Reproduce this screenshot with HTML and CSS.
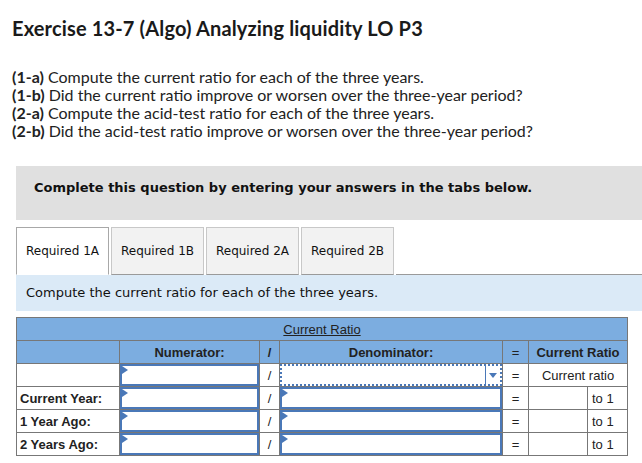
FILE: index.html
```
<!DOCTYPE html>
<html>
<head>
<meta charset="utf-8">
<link rel="stylesheet" href="styles.css">
</head>
<body>
<h1 class="title">Exercise 13-7 (Algo) Analyzing liquidity LO P3</h1>
<div class="questions">
  <p><b>(1-a)</b> Compute the current ratio for each of the three years.</p>
  <p><b>(1-b)</b> Did the current ratio improve or worsen over the three-year period?</p>
  <p><b>(2-a)</b> Compute the acid-test ratio for each of the three years.</p>
  <p><b>(2-b)</b> Did the acid-test ratio improve or worsen over the three-year period?</p>
</div>
<div class="wrap">
  <div class="notice">Complete this question by entering your answers in the tabs below.</div>
  <div class="tabs">
    <div class="tab active">Required 1A</div>
    <div class="tab">Required 1B</div>
    <div class="tab">Required 2A</div>
    <div class="tab">Required 2B</div>
    <div class="tabfill"></div>
  </div>
  <div class="instr">Compute the current ratio for each of the three years.</div>
  <table class="grid">
    <colgroup>
      <col class="c-label"><col class="c-num"><col class="c-slash"><col class="c-den"><col class="c-eq"><col class="c-r1"><col class="c-r2">
    </colgroup>
    <tr class="h1"><th colspan="7"><span class="u">Current Ratio</span></th></tr>
    <tr class="h2">
      <th></th><th class="b">Numerator:</th><th class="b">/</th><th class="b">Denominator:</th><th>=</th><th colspan="2" class="b">Current Ratio</th>
    </tr>
    <tr>
      <td></td>
      <td class="in"><div class="box"></div></td>
      <td class="sl">/</td>
      <td class="in"><div class="sel"><span class="arrow"></span></div></td>
      <td class="eq">=</td>
      <td colspan="2" class="ctr">Current ratio</td>
    </tr>
    <tr>
      <td class="lbl">Current Year:</td>
      <td class="in"><div class="box"></div></td>
      <td class="sl">/</td>
      <td class="in"><div class="box"></div></td>
      <td class="eq">=</td>
      <td></td><td class="to">to 1</td>
    </tr>
    <tr>
      <td class="lbl">1 Year Ago:</td>
      <td class="in"><div class="box"></div></td>
      <td class="sl">/</td>
      <td class="in"><div class="box"></div></td>
      <td class="eq">=</td>
      <td></td><td class="to">to 1</td>
    </tr>
    <tr>
      <td class="lbl">2 Years Ago:</td>
      <td class="in"><div class="box"></div></td>
      <td class="sl">/</td>
      <td class="in"><div class="box"></div></td>
      <td class="eq">=</td>
      <td></td><td class="to">to 1</td>
    </tr>
  </table>
</div>
</body>
</html>
```
FILE: styles.css
```
html, body { margin: 0; padding: 0; background: #fff; }
body { width: 642px; overflow: hidden; color: #222; }
.title {
  font-family: Lato, "Open Sans", sans-serif;
  font-weight: 700;
  font-size: 20px;
  line-height: 22px;
  margin: 0;
  padding: 17px 0 0 12px;
  color: #1a1a1a;
  letter-spacing: 0.15px;
}
.questions {
  font-family: Lato, "Open Sans", sans-serif;
  font-size: 16px;
  line-height: 18px;
  padding: 29px 0 0 12px;
  color: #222;
}
.questions p { margin: 0; }
.questions b { font-weight: 700; }
.wrap { padding: 26px 0 0 16px; }
.notice {
  background: #e0e0e0;
  height: 54px;
  box-sizing: border-box;
  padding: 14px 0 0 18px;
  font-family: "DejaVu Sans", Verdana, sans-serif;
  font-weight: 700;
  font-size: 13px;
  line-height: 16px;
  color: #111;
}
.tabs { display: flex; margin-top: 7px; height: 48px; }
.tab {
  box-sizing: border-box;
  width: 93px;
  height: 48px;
  margin-right: 2px;
  background: #f2f2f2;
  border: 1px solid #c8c8c8;
  border-bottom: 1px solid #9a9a9a;
  font-family: "DejaVu Sans", Verdana, sans-serif;
  font-size: 12px;
  line-height: 16px;
  padding-top: 15px;
  text-align: center;
  color: #111;
}
.tab.active { background: #fff; border-color: #a8a8a8; border-bottom-color: #fff; }
.tabfill { flex: 1; border-bottom: 1px solid #9a9a9a; }
.instr {
  background: #dbeaf7;
  height: 36px;
  box-sizing: border-box;
  padding: 10px 0 0 10px;
  font-family: "DejaVu Sans", Verdana, sans-serif;
  font-size: 13px;
  line-height: 16px;
  color: #111;
}
.grid {
  margin-top: 6px;
  border-collapse: collapse;
  table-layout: fixed;
  width: 611px;
  font-family: "Liberation Sans", Arial, sans-serif;
  font-size: 13px;
  color: #222;
}
.c-label { width: 103px; }
.c-num { width: 140px; }
.c-slash { width: 20px; }
.c-den { width: 223px; }
.c-eq { width: 26px; }
.c-r1 { width: 59px; }
.c-r2 { width: 40px; }
.grid th, .grid td {
  border: 1px solid #777;
  height: 23px;
  padding: 0;
  box-sizing: border-box;
}
.grid th { background: #7cade0; font-weight: 400; text-align: center; }
.grid th.b { font-weight: 700; }
.u { text-decoration: underline; }
.lbl { font-weight: 700; padding-left: 3px !important; text-align: left; }
.sl { text-align: center; }
.eq { text-align: center; }
.ctr { text-align: center; }
.to { padding-left: 4px !important; }
.in { position: relative; }
.box {
  position: absolute;
  left: 0; top: 0; right: 0; bottom: 0;
  border: 2px solid #4a78b8;
  background: #fff;
}
.box::before {
  content: "";
  position: absolute;
  left: 0; top: 0;
  border-left: 6px solid #4a78b8;
  border-top: 4px solid transparent;
  border-bottom: 4px solid transparent;
}
.sel {
  position: absolute;
  left: 0; top: 0; right: 0; bottom: 0;
  border: 2px dotted #4a78b8;
  background: #fff;
}
.arrow {
  position: absolute;
  right: 0; top: 0; bottom: 0;
  width: 14px;
  border-left: 1px solid #4a78b8;
}
.arrow::after {
  content: "";
  position: absolute;
  left: 3px; top: 7px;
  border-top: 5px solid #4a78b8;
  border-left: 4px solid transparent;
  border-right: 4px solid transparent;
}
```
